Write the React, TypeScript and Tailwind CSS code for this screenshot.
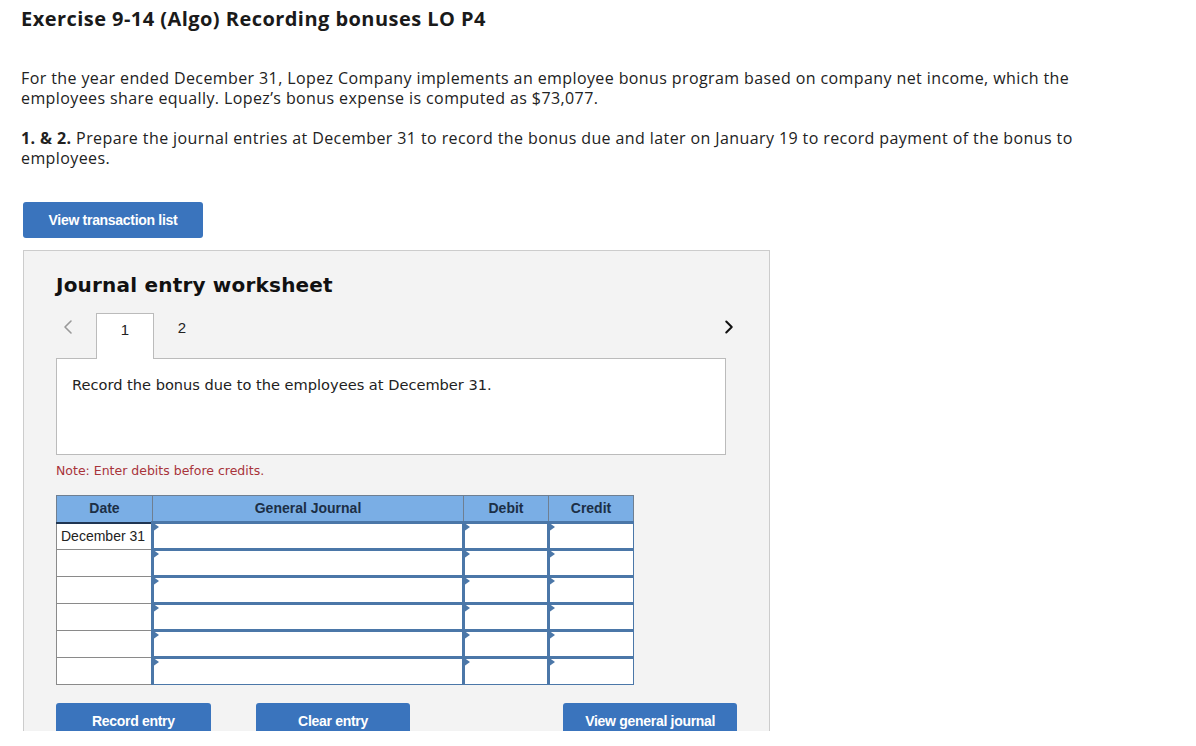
import { ChevronLeft, ChevronRight } from "lucide-react";

const rows = ["December 31", "", "", "", "", ""];

function InputCell() {
  return (
    <td className="relative border-[#4b77a8] border-t-[3px] border-l-[3px] border-r border-b bg-white p-0">
      <span className="absolute -left-[2px] -top-[2px] h-0 w-0 border-y-[5px] border-l-[7px] border-y-transparent border-l-[#4b77a8]" />
    </td>
  );
}

function BlueButton({ label, className }: { label: string; className: string }) {
  return (
    <button
      type="button"
      className={`h-9 rounded-[3px] bg-[#3a74bd] text-[14px] font-bold tracking-[-0.3px] text-white font-['Liberation_Sans',Arial,sans-serif] ${className}`}
    >
      {label}
    </button>
  );
}

export default function App() {
  return (
    <div className="h-[731px] overflow-hidden bg-white">
      <div className="px-[21px] pt-[6px] text-[#222] font-['Open_Sans','Lato',sans-serif]">
        <h1 className="text-[20px] font-bold leading-[26px] tracking-[0.45px] text-[#1a1a1a]">
          Exercise 9-14 (Algo) Recording bonuses LO P4
        </h1>
        <p className="mt-[36px] text-[16px] leading-[20px] tracking-[0.4px]">
          For the year ended December 31, Lopez Company implements an employee bonus program based on company net income, which the
          <br />
          employees share equally. Lopez’s bonus expense is computed as $73,077.
        </p>
        <p className="mt-[20px] text-[16px] leading-[20px] tracking-[0.4px]">
          <span className="font-bold">1. &amp; 2.</span> Prepare the journal entries at December 31 to record the bonus due and later on January 19 to record payment of the bonus to
          <br />
          employees.
        </p>
      </div>

      <div className="px-[23px] pt-[34px]">
        <BlueButton label="View transaction list" className="w-[180px]" />
      </div>

      <div className="mx-[23px] mt-[12px] h-[600px] w-[747px] border border-[#cccccc] bg-[#f3f3f3] px-[32px] pt-[20px] font-['DejaVu_Sans',Verdana,sans-serif]">
        <h2 className="text-[20px] font-bold leading-[28px] tracking-[0.2px] text-[#111]">Journal entry worksheet</h2>

        <div className="mt-[13px] flex h-[46px] items-end">
          <div className="flex h-full w-[40px] items-start pt-[3px]">
            <ChevronLeft className="ml-0 h-[24px] w-[24px] text-[#999]" strokeWidth={1.6} />
          </div>
          <div className="relative -mb-px flex h-[46px] w-[58px] items-start justify-center border border-b-0 border-[#bbbbbb] bg-white pt-[5px] text-[15px] text-[#222] font-['Liberation_Sans',Arial,sans-serif]">
            1
          </div>
          <div className="flex h-full w-[56px] items-start justify-center pt-[5px] text-[15px] text-[#222] font-['Liberation_Sans',Arial,sans-serif]">
            2
          </div>
          <div className="flex h-full flex-1 items-start justify-end pt-[4px] -mr-[3px]">
            <ChevronRight className="h-[22px] w-[22px] text-[#111]" strokeWidth={2.2} />
          </div>
        </div>

        <div className="h-[97px] w-[670px] border border-[#bbbbbb] bg-white px-[15px] pt-[16px] text-[14.6px] leading-[20px] text-[#222]">
          Record the bonus due to the employees at December 31.
        </div>

        <p className="mt-[8px] text-[12.5px] leading-[16px] text-[#a8343a]">Note: Enter debits before credits.</p>

        <table className="mt-[16px] w-[577px] table-fixed border-collapse font-['Liberation_Sans',Arial,sans-serif] text-[14px]">
          <colgroup>
            <col className="w-[96px]" />
            <col className="w-[311px]" />
            <col className="w-[85px]" />
            <col className="w-[85px]" />
          </colgroup>
          <thead>
            <tr className="h-[27px] bg-[#7aaee5] text-[#1c2f46]">
              <th className="border border-b-2 border-[#6f7f91] border-b-[#1f3552] font-bold">Date</th>
              <th className="border border-b-2 border-[#6f7f91] border-b-[#1f3552] border-l-[#1f3552] font-bold">General Journal</th>
              <th className="border border-b-2 border-[#6f7f91] border-b-[#1f3552] border-l-[#1f3552] font-bold">Debit</th>
              <th className="border border-b-2 border-[#6f7f91] border-b-[#1f3552] border-l-[#1f3552] font-bold">Credit</th>
            </tr>
          </thead>
          <tbody>
            {rows.map((d, i) => (
              <tr key={i} className="h-[27px]">
                <td className="border border-[#8a8a8a] bg-white px-[4px] text-[14px] text-[#222]">{d}</td>
                <InputCell />
                <InputCell />
                <InputCell />
              </tr>
            ))}
          </tbody>
        </table>

        <div className="mt-[18px] flex">
          <BlueButton label="Record entry" className="w-[155px]" />
          <BlueButton label="Clear entry" className="ml-[45px] w-[155px]" />
          <BlueButton label="View general journal" className="ml-[153px] w-[174px]" />
        </div>
      </div>
    </div>
  );
}
